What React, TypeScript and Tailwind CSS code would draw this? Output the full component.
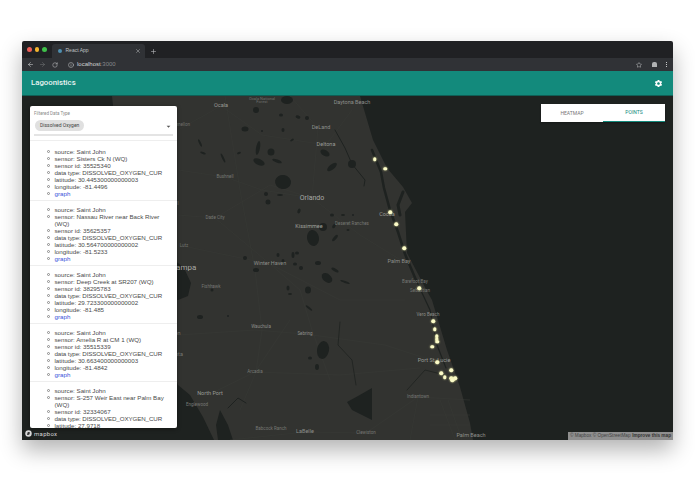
import { ArrowLeft, ArrowRight, RotateCw, Info, Star, X, Plus } from "lucide-react";
import { MdSettings, MdArrowDropDown } from "react-icons/md";

const readings = [
  { sensor: "Sisters Ck N (WQ)", id: "35525340", lat: "30.445300000000003", lng: "-81.4496" },
  { sensor: "Nassau River near Back River (WQ)", id: "35625357", lat: "30.564700000000002", lng: "-81.5233" },
  { sensor: "Deep Creek at SR207 (WQ)", id: "38295783", lat: "29.723300000000002", lng: "-81.485" },
  { sensor: "Amelia R at CM 1 (WQ)", id: "35515339", lat: "30.663400000000003", lng: "-81.4842" },
  { sensor: "S-257 Weir East near Palm Bay (WQ)", id: "32334067", lat: "27.9718", lng: "-80.6" },
];

// label centre in page coords: text, x, y, size, brightness
const labels: [string, number, number, number, string][] = [
  ["Daytona Beach", 352, 103, 5.5, "#8d8e8a"],
  ["Ocala", 221, 106, 5.5, "#999a96"],
  ["Ocala National", 262, 98.5, 4, "#6f706c"],
  ["Forest", 262, 102, 4, "#6f706c"],
  ["DeLand", 321, 128, 5.5, "#8d8e8a"],
  ["Deltona", 326, 145, 5.5, "#999a96"],
  ["Orlando", 312, 198, 7, "#a8a9a5"],
  ["Bushnell", 225, 177, 4.5, "#777874"],
  ["Dade City", 215, 218, 4.5, "#777874"],
  ["Kissimmee", 309, 227, 5.5, "#a0a19d"],
  ["Deseret Ranches", 352, 224, 4.5, "#777874"],
  ["Winter Haven", 270, 264, 5.5, "#8d8e8a"],
  ["Lutz", 184, 246, 4.5, "#6f706c"],
  ["Spring Hill", 166, 204, 5.5, "#777874"],
  ["Dunnellon", 180, 125, 4.5, "#6f706c"],
  ["Tampa", 184, 268, 8, "#a8a9a5"],
  ["Fishhawk", 211, 287, 4.5, "#777874"],
  ["Wauchula", 261, 327, 4.5, "#8d8e8a"],
  ["Sebring", 305, 334, 4.5, "#8d8e8a"],
  ["Bradenton", 168, 334, 5.5, "#777874"],
  ["Sarasota", 172, 355, 5.5, "#777874"],
  ["Arcadia", 255, 372, 4.5, "#777874"],
  ["North Port", 210, 394, 5.5, "#999a96"],
  ["Englewood", 197, 405, 4.5, "#777874"],
  ["Babcock Ranch", 271, 429, 4.5, "#777874"],
  ["LaBelle", 305, 432, 5.5, "#8d8e8a"],
  ["Clewiston", 366, 433, 4.5, "#777874"],
  ["Cocoa", 387, 215, 5.5, "#999a96"],
  ["Palm Bay", 399, 262, 5.5, "#8d8e8a"],
  ["Barefoot Bay", 415, 282, 4.5, "#777874"],
  ["Sebastian", 420, 291, 4.5, "#777874"],
  ["Vero Beach", 428, 315, 4.5, "#8d8e8a"],
  ["Port St. Lucie", 434, 361, 5.5, "#999a96"],
  ["Indiantown", 418, 397, 4.5, "#777874"],
  ["Palm Beach", 471, 436, 5.5, "#8d8e8a"],
];

const points = [
  [374.5, 159], [385, 168.5], [390, 212], [396, 224], [404, 248], [419, 288],
  [433, 321], [434.5, 329], [436.5, 336], [436.5, 339], [437, 341.5], [432, 346.5], [437, 362],
  [451, 370], [441, 373], [444.5, 377], [451, 378], [453, 379], [455, 378], [452, 380],
];

// lakes: cx, cy, rx, ry, rotation
const lakes = [
  [283, 182, 8, 7, 10], [258, 148, 2, 7, 10], [271, 152, 3.5, 3.5, 0], [259, 162, 6, 3, 25], [277, 161, 5, 1.5, 20],
  [245, 129, 3.5, 2.5, 0], [287, 100, 6, 4, 0], [256, 110, 3, 3, 0], [325, 153, 5, 3, 30], [332, 167, 6, 2.5, -40],
  [352, 164, 4, 4, 0], [223, 158, 1, 5, -25], [313, 238, 6, 8, -10], [323, 227, 4, 4, 0], [268, 202, 2.5, 2.5, 0],
  [266, 194, 2, 2, 0], [280, 195, 3, 1, 0], [299, 211, 1.5, 2.5, 20], [332, 215, 2, 1.5, 0], [335, 238, 1.5, 4, 40],
  [334, 226, 1.5, 2.5, 30], [323, 350, 6, 9, 10], [308, 290, 3, 3.5, 0], [200, 317, 3, 2, 0], [327, 278, 6, 4, 40],
  [345, 282, 5, 1, 20], [317, 367, 2, 3, 0], [310, 358, 2, 1.5, 0], [290, 294, 2, 1, 0], [288, 288, 1.5, 2.5, 0],
  [309, 308, 4, 1, 40], [262, 131, 1, 1, 0], [281, 115, 2, 1.5, 0], [298, 117, 2.5, 1.5, 20], [307, 118, 2, 2, 0],
  [283, 130, 1.5, 2, 0], [292, 140, 2, 1, -30], [200, 143, 1, 4, -25], [203, 153, 3, 1, 20], [239, 153, 2, 1, -20],
  [283, 262, 1.5, 3, 0], [293, 255, 1.5, 3, 0], [278, 255, 1.5, 2, 0], [301, 268, 2, 2, 0], [295, 264, 2, 1.5, 0],
  [245, 258, 2, 2, 0], [256, 270, 3, 2, 0], [318, 263, 3, 2, 0], [335, 270, 4, 1.5, 30], [297, 253, 2, 1.5, 0],
  [343, 215, 2, 1, 0], [353, 215, 1, 1, 0], [348, 230, 1.5, 1, 0], [212, 290, 1.5, 1.5, 0], [228, 316, 1, 1, 0],
];

const roads = [
  "M225 96 L240 190 L255 270 L262 330 L256 372 L240 410",
  "M178 130 L221 106 L262 135 L326 145 L352 110",
  "M178 215 L215 218 L270 185 L312 198 L360 235 L404 262",
  "M225 177 L262 190 L312 198",
  "M178 335 L255 330 L305 334 L385 345 L434 361",
  "M255 372 L340 375 L420 368",
  "M270 264 L300 290 L312 330 L330 380",
  "M210 394 L255 372 L290 320",
  "M405 300 L340 300 L270 264 L215 218",
  "M312 198 L318 128 L290 96",
  "M305 432 L366 433 L418 397 L470 400",
  "M230 440 L305 432",
  "M418 397 L410 440",
  "M440 400 L455 440 M448 400 L462 440 M430 415 L470 415 M430 425 L470 425",
  "M178 170 L225 177 M178 245 L270 264",
];

function Reading({ item }: { item: (typeof readings)[number] }) {
  return (
    <ul className="pl-[24.5px] pr-[12px] pt-[5px] pb-[3px] border-b border-[#eeeeee] [&>li]:relative [&>li]:before:absolute [&>li]:before:left-[-7.5px] [&>li]:before:top-[2px] [&>li]:before:w-[3px] [&>li]:before:h-[3px] [&>li]:before:rounded-full [&>li]:before:border [&>li]:before:border-[#8a8a8a]">
      <li>source: Saint John</li>
      <li>sensor: {item.sensor}</li>
      <li>sensor id: {item.id}</li>
      <li className="whitespace-nowrap tracking-[-0.1px]">data type: DISSOLVED_OXYGEN_CUR</li>
      <li>latitude: {item.lat}</li>
      <li>longitude: {item.lng}</li>
      <li>
        <span className="text-[#3b50d9]">graph</span>
      </li>
    </ul>
  );
}

function MapLayer() {
  return (
    <>
      <svg className="absolute inset-0 w-full h-full" viewBox="22 96 651 344">
        <path
          fill="#323330"
          d="M112 96 L360 96 L373 140 L387 168 L403 187 L412 203 L405 212 L407 253 L428 293 L432 300 L447 350 L460 387 L470 423 L473 440 L233 440 L228 425 L220 410 L216 425 L218 440 L214 440 L203 417 L190 395 L178 385 L160 340 L165 300 L178 300 L188 296 L191 283 L184 268 L150 240 L120 170 Z"
        />
        <g fill="none" stroke="#393a37" strokeWidth="0.5">
          {roads.map((d) => (
            <path key={d} d={d} />
          ))}
        </g>
        {/* lagoon and rivers */}
        <g fill="none" stroke="#1e2220" strokeLinecap="round">
          <path strokeWidth="2.5" d="M372 150 L381 172 L384 188 L390 210 L398 232 L405 254 L416 280" />
          <path strokeWidth="3" d="M403 192 L398 205 L400 215" />
          <path strokeWidth="1.2" d="M416 280 L430 310 L437 345 L446 368" />
          <path strokeWidth="1" d="M335 130 L345 148 L352 164 L365 180 L364 186" />
          <path strokeWidth="0.8" d="M340 322 L338 345 L352 360 L356 385" />
          <path strokeWidth="0.8" d="M407 390 L425 370 L445 375" />
          <path strokeWidth="1" d="M228 408 L238 398 L246 403" />
        </g>
        <path fill="#1e2220" d="M347 402 L358 396 L372 388 L372 420 L362 415 L352 410 Z" />
        <g fill="#1e2220">
          {lakes.map(([cx, cy, rx, ry, r]) => (
            <ellipse key={`${cx}-${cy}`} cx={cx} cy={cy} rx={rx} ry={ry} transform={`rotate(${r} ${cx} ${cy})`} />
          ))}
        </g>
      </svg>

      {labels.map(([text, x, y, size, color]) => (
        <span
          key={text}
          className="absolute -translate-x-1/2 -translate-y-1/2 whitespace-nowrap font-['Roboto',sans-serif] leading-none"
          style={{ left: x - 22, top: y - 96, fontSize: size, color }}
        >
          {text}
        </span>
      ))}

      {points.map(([x, y]) => (
        <span
          key={`${x}-${y}`}
          className="absolute w-[3.5px] h-[3.5px] -translate-x-1/2 -translate-y-1/2 rounded-full bg-[#fbfbc8] shadow-[0_0_2px_#e8e8a0]"
          style={{ left: x - 22, top: y - 96 }}
        />
      ))}
    </>
  );
}

export default function App() {
  return (
    <div className="w-[695px] h-[494px] bg-white pt-[41px] px-[22px] overflow-hidden font-['Liberation_Sans',sans-serif]">
      <div className="h-[399px] flex flex-col rounded-t-[2px] overflow-hidden shadow-[0_10px_22px_rgba(0,0,0,0.3)]">
        {/* Tab strip */}
        <div className="h-[17px] shrink-0 bg-[#202124] flex items-end">
          <div className="flex items-center gap-[3px] pl-[5px] pr-[3px] h-full w-[30px]">
            <span className="w-[4.5px] h-[4.5px] shrink-0 rounded-full bg-[#ed5f58]" />
            <span className="w-[4.5px] h-[4.5px] shrink-0 rounded-full bg-[#f5b52e]" />
            <span className="w-[4.5px] h-[4.5px] shrink-0 rounded-full bg-[#3fc14a]" />
          </div>
          <div className="h-[14px] w-[93px] bg-[#303236] rounded-t-[3px] flex items-center pl-[6px] pr-[4px] gap-[3.5px]">
            <span className="w-[4px] h-[4px] rounded-full bg-[#4f8fb0]" />
            <span className="text-[5px] text-[#bfc1c4] flex-1">React App</span>
            <X size={6} color="#b8babd" />
          </div>
          <div className="h-[14px] flex items-center pl-[5px]">
            <Plus size={7} color="#b8babd" />
          </div>
        </div>

        {/* Toolbar */}
        <div className="h-[13px] shrink-0 bg-[#303236] flex items-center pl-[5px] pr-[6px] text-[#c6c8ca]">
          <ArrowLeft size={7} />
          <ArrowRight size={7} className="ml-[5px] text-[#6d6f72]" />
          <RotateCw size={6} className="ml-[6px]" />
          <Info size={6} className="ml-[10px]" />
          <span className="ml-[3px] text-[6px] text-[#d0d2d4]">
            localhost<span className="text-[#85878a]">:3000</span>
          </span>
          <Star size={6} className="ml-auto" />
          <span className="ml-[10px] w-[5px] h-[5px] rounded-t-[2px] bg-[#b0b2b4]" />
          <span className="ml-[9px] flex flex-col gap-[1px]">
            <span className="w-[1px] h-[1px] bg-[#c6c8ca]" />
            <span className="w-[1px] h-[1px] bg-[#c6c8ca]" />
            <span className="w-[1px] h-[1px] bg-[#c6c8ca]" />
          </span>
        </div>

        {/* App bar */}
        <div className="h-[25px] shrink-0 bg-[#138a7c] border-b border-[#0f5f56] flex items-center justify-between pl-[9px] pr-[10px]">
          <span className="font-['Roboto',sans-serif] font-medium text-[7.8px] text-[#e8f4f2]">
            Lagoonistics
          </span>
          <MdSettings size={9} color="#ffffff" />
        </div>

        {/* Map */}
        <div className="relative flex-1 bg-[#1e2220] overflow-hidden">
          <MapLayer />

          {/* Filter panel */}
          <div className="absolute left-[8px] top-[10px] w-[147px] h-[322px] bg-white rounded-[2px] shadow-[0_1px_4px_rgba(0,0,0,0.4)] overflow-hidden flex flex-col">
            <div className="h-[35px] shrink-0 px-[4px] pt-[5px] border-b border-[#eeeeee]">
              <div className="font-['Roboto',sans-serif] text-[4.5px] leading-[6px] text-[#8a8a8a]">
                Filtered Data Type
              </div>
              <div className="relative h-[19px] border-b-[2px] border-[#e4e4e4] flex items-center">
                <span className="h-[11px] ml-[1px] px-[5px] rounded-full bg-[#e0e0e0] font-['Roboto',sans-serif] text-[5px] leading-[11px] text-[#444]">
                  Dissolved Oxygen
                </span>
                <MdArrowDropDown size={9} color="#555" className="absolute right-[0px] top-[5px]" />
              </div>
            </div>
            <div className="flex-1 overflow-hidden pt-[2px] text-[6.2px] leading-[7px] text-[#4a4a4a]">
              {readings.map((r) => (
                <Reading key={r.id} item={r} />
              ))}
            </div>
          </div>

          {/* Map style tabs */}
          <div className="absolute left-[519px] top-[8px] w-[124px] h-[18px] bg-white flex font-['Roboto',sans-serif] text-[5px] shadow-[0_1px_2px_rgba(0,0,0,0.3)]">
            <div className="flex-1 flex items-center justify-center pt-[1px] text-[#777]">HEATMAP</div>
            <div className="flex-1 flex items-center justify-center pt-[1px] text-[#138a7c] border-b border-[#138a7c]">POINTS</div>
          </div>

          {/* Mapbox logo */}
          <div className="absolute left-[3px] bottom-[3px] flex items-center gap-[2px]">
            <svg width="7" height="7" viewBox="0 0 10 10">
              <circle cx="5" cy="5" r="4.6" fill="#d8d8d8" />
              <path d="M3 7 L3.5 4 Q4 2.5 6 3 L7 3.5 L6.5 6 Q5.5 7.5 3 7 Z" fill="#333" />
            </svg>
            <span className="font-['Roboto',sans-serif] text-[6px] leading-none tracking-[0.3px] text-[#d4d4d4]">
              mapbox
            </span>
          </div>

          {/* Attribution */}
          <div className="absolute right-0 bottom-0 h-[8px] w-[105px] px-[2px] bg-[#8f8f8f] flex items-center justify-between text-[4.7px] leading-none text-[#444] whitespace-nowrap">
            <span>© Mapbox © OpenStreetMap</span>
            <span className="font-bold text-[#333]">Improve this map</span>
          </div>
        </div>
      </div>
    </div>
  );
}
